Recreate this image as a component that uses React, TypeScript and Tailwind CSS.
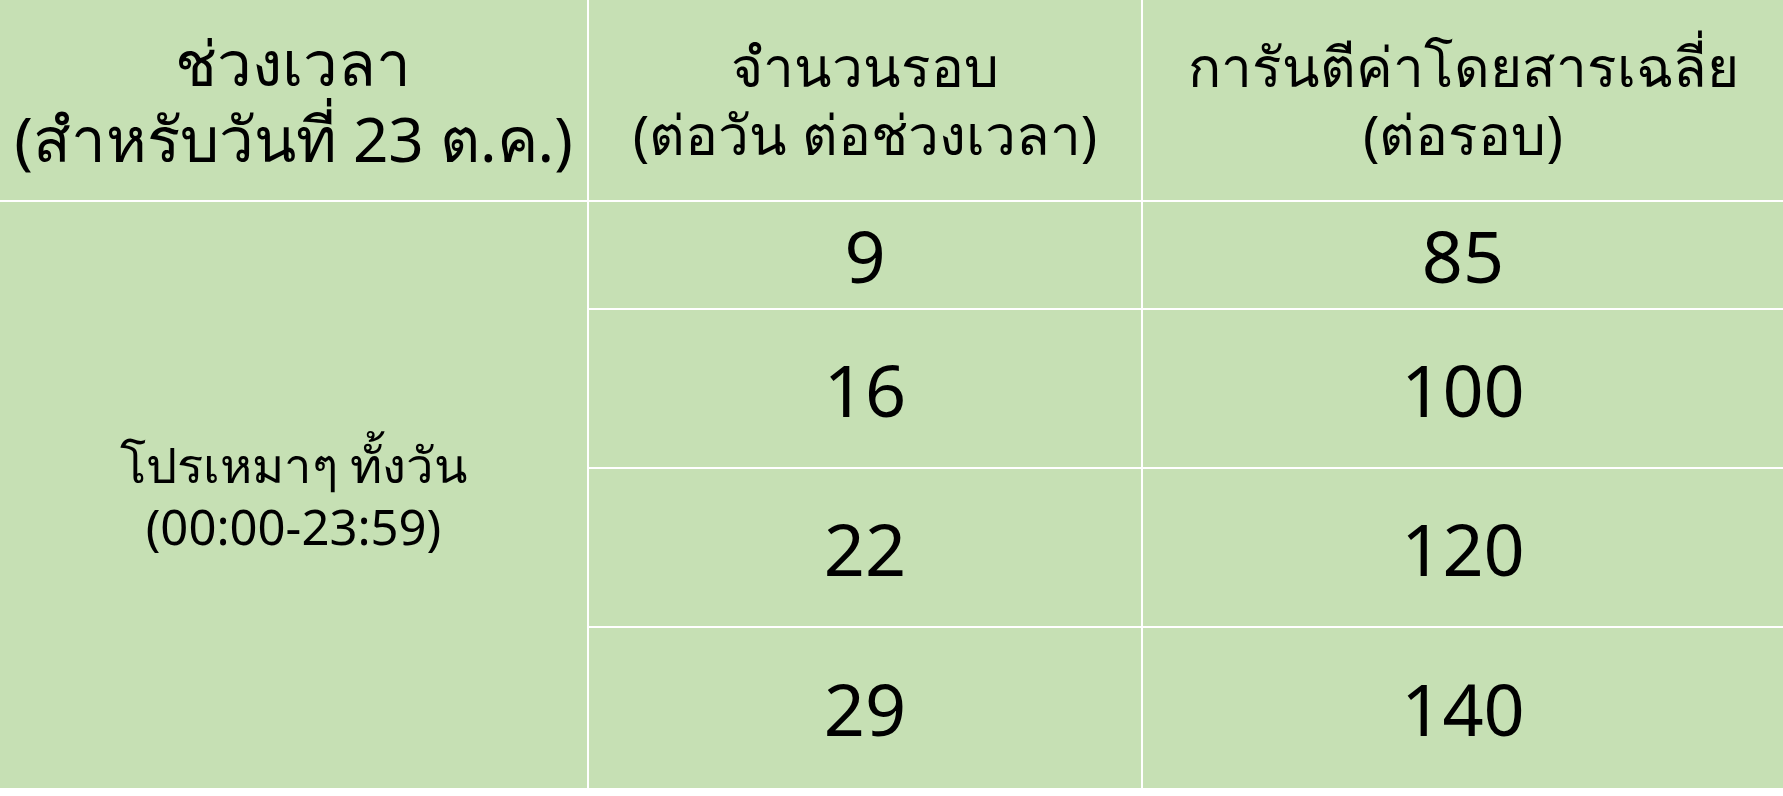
export default function App() {
  const rows = [
    { trips: "9", fare: "85" },
    { trips: "16", fare: "100" },
    { trips: "22", fare: "120" },
    { trips: "29", fare: "140" },
  ];

  return (
    <div className="w-[1783px] h-[796px] bg-white text-black font-['Noto_Sans','Tahoma',sans-serif]">
      <div className="grid grid-cols-[587px_552px_640px] grid-rows-[200px_106px_157px_157px_160px] gap-[2px] bg-white">
        {/* header */}
        <div className="bg-[#c6e0b4] flex items-center justify-center text-center text-[62px] leading-[76px]">
          <div>
            ช่วงเวลา
            <br />
            (สำหรับวันที่ 23 ต.ค.)
          </div>
        </div>
        <div className="bg-[#c6e0b4] flex items-center justify-center text-center text-[55px] leading-[68px]">
          <div>
            จำนวนรอบ
            <br />
            (ต่อวัน ต่อช่วงเวลา)
          </div>
        </div>
        <div className="bg-[#c6e0b4] flex items-center justify-center text-center text-[55px] leading-[68px]">
          <div>
            การันตีค่าโดยสารเฉลี่ย
            <br />
            (ต่อรอบ)
          </div>
        </div>

        {/* merged time slot cell */}
        <div className="row-span-4 bg-[#c6e0b4] flex items-center justify-center text-center text-[49px] leading-[62px]">
          <div>
            <div>โปรเหมาๆ ทั้งวัน</div>
            <div>(00:00-23:59)</div>
          </div>
        </div>

        {rows.map((r) => (
          <div key={r.trips} className="contents">
            <div className="bg-[#c6e0b4] flex items-center justify-center text-[72px]">
              {r.trips}
            </div>
            <div className="bg-[#c6e0b4] flex items-center justify-center text-[72px]">
              {r.fare}
            </div>
          </div>
        ))}
      </div>
    </div>
  );
}
